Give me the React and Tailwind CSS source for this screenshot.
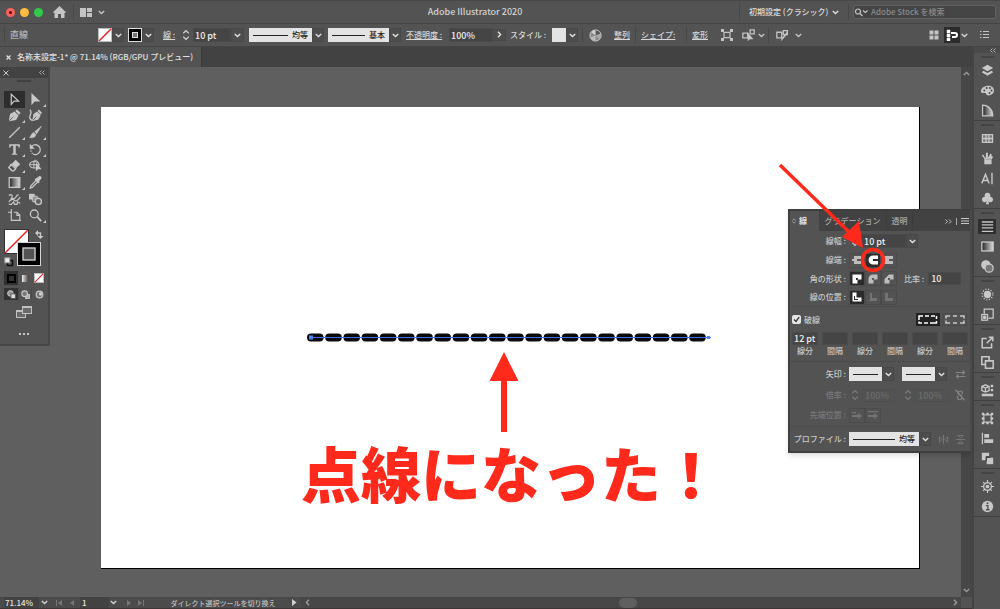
import React, { useState } from 'react';
import clsx from 'clsx';

const Icon = ({ size = 14, children, className }) => (
  <svg width={size} height={size} viewBox="0 0 16 16" fill="none" stroke="currentColor" strokeWidth="1.600" className={clsx('shrink-0', className)} aria-hidden="true">
    {children}
  </svg>
);

const Chevron = ({ className }) => (
  <svg width="7" height="5" viewBox="0 0 7 5" fill="none" stroke="currentColor" strokeWidth="1.400" className={clsx('shrink-0', className)} aria-hidden="true">
    <path d="M.8 1l2.700 2.600L6.200 1" />
  </svg>
);

const Stepper = ({ className }) => (
  <svg width="8" height="12" viewBox="0 0 8 12" fill="none" stroke="currentColor" strokeWidth="1.200" className={clsx('shrink-0', className)} aria-hidden="true">
    <path d="M1.300 4.200L4 1.600l2.700 2.600M1.300 7.800L4 10.400l2.700-2.600" />
  </svg>
);

const DropButton = ({ label, className }) => (
  <button aria-label={label} className={clsx('flex h-[14px] w-3 shrink-0 items-center justify-center border border-[#484848] bg-[#4d4d4d] text-[#e0e0e0]', className)}>
    <Chevron />
  </button>
);

const Separator = ({ className }) => <span className={clsx('h-4 w-px shrink-0 bg-[#474747]', className)} />;

const NoneSwatch = ({ size }) => (
  <svg width={size} height={size} viewBox="0 0 14 14" aria-hidden="true">
    <rect x=".5" y=".5" width="13" height="13" fill="#fff" stroke="#bbb" />
    <path d="M1 13L13 1" stroke="#e8202a" strokeWidth="1.500" />
  </svg>
);

// light swatch with a line sample, used for profiles, brushes and arrowheads
const LineSample = ({ label, text, className }) => (
  <button aria-label={label} className={clsx('flex h-[14px] shrink-0 items-center gap-1 bg-[#e3e3e3] px-1 text-[#222]', className)}>
    <span className="h-px flex-1 bg-[#222]" />
    {text && <span className="leading-3">{text}</span>}
  </button>
);

const TitleBar = () => (
  <header className="flex h-6 shrink-0 items-center border-b border-[#444] border-t border-t-[#484848]">
    <div className="flex w-[211px] shrink-0 items-center">
      <button aria-label="閉じる" className="ml-[6px] flex size-[9px] items-center justify-center rounded-full bg-[#fc605c]">
        <span className="size-[3px] rounded-full bg-[#4d0000]" />
      </button>
      <button aria-label="しまう" className="ml-[5px] size-[9px] rounded-full bg-[#fdbc40]" />
      <button aria-label="拡大" className="ml-[5px] size-[9px] rounded-full bg-[#34c84a]" />
      <button aria-label="ホーム" className="ml-[10px] text-[#c4c4c4]">
        <svg width="13" height="12" viewBox="0 0 13 12" fill="currentColor"><path d="M6.500 0L13 6.300l-.8.800-.7-.600V12H8V8H5v4H1.500V6.500l-.7.600L0 6.300z" /></svg>
      </button>
      <Separator className="ml-[7px]" />
      <button aria-label="ドキュメントのレイアウト" className="ml-[6px] flex items-center gap-[6px] text-[#c4c4c4]">
        <svg width="12" height="9" viewBox="0 0 12 9" fill="currentColor"><path d="M0 0h6v9H0zM7 0h5v4H7zM7 5h5v4H7z" /></svg>
        <Chevron />
      </button>
    </div>
    <h1 className="flex-1 text-center text-[9px] text-[#d0d0d0]">Adobe Illustrator 2020</h1>
    <div className="flex w-[261px] shrink-0 items-center">
      <Separator />
      <select aria-label="ワークスペース" className="ml-[9px] w-[83px] appearance-none bg-transparent text-[#dedede]" defaultValue="classic">
        <option value="classic">初期設定 (クラシック)</option>
      </select>
      <Chevron className="text-[#dedede]" />
      <Separator className="ml-[9px]" />
      <label className="mr-1 ml-1 flex h-[14px] flex-1 items-center rounded-xs border border-[#616161] bg-[#454545] text-[#c4c4c4]">
        <svg width="14" height="9" viewBox="0 0 14 9" fill="none" stroke="currentColor" strokeWidth="1.200" aria-hidden="true" className="shrink-0"><circle cx="4" cy="3.500" r="2.500" /><path d="M6 5.500L8.500 8M9 2.500l2.300 2 2.300-2" /></svg>
        <input aria-label="Adobe Stock を検索" placeholder="Adobe Stock を検索" className="ml-[3px] w-full min-w-0 bg-transparent placeholder:text-[#8a8a8a]" />
      </label>
    </div>
  </header>
);

const ControlBar = () => (
  <div className="flex h-[23px] shrink-0 items-center border-b border-[#444] text-[#d6d6d6]">
    <Separator className="ml-1" />
    <span className="ml-[5px] w-[88px] text-[9px] text-[#b5b5b5]">直線</span>
    <button aria-label="塗り"><NoneSwatch size={14} /></button>
    <DropButton label="塗りのスウォッチ" />
    <button aria-label="線のカラー" className="ml-1 size-[14px] border border-[#ddd] bg-black p-[3px]">
      <span className="block size-[6px] border border-[#ddd] bg-[#777]" />
    </button>
    <DropButton label="線のスウォッチ" />
    <label htmlFor="bar-width" className="ml-[9px] w-[16px] text-[#d6d6d6] underline">線 :</label>
    <Stepper className="ml-[3px]" />
    <input id="bar-width" defaultValue="10 pt" className="ml-[3px] h-[14px] w-[38px] border border-[#4a4a4a] bg-[#454545] pl-px text-[9px] text-[#eee]" />
    <DropButton label="線幅の候補" className="w-[13px]" />
    <LineSample label="可変線幅プロファイル" text="均等" className="ml-[5px] w-[63px]" />
    <DropButton label="プロファイルの候補" />
    <LineSample label="ブラシ定義" text="基本" className="ml-1 w-[61px]" />
    <DropButton label="ブラシの候補" />
    <label htmlFor="opacity" className="ml-[5px] w-[43px] underline">不透明度 :</label>
    <input id="opacity" defaultValue="100%" className="h-[14px] w-[44px] border border-[#4a4a4a] bg-[#454545] pl-px text-[9px] text-[#eee]" />
    <DropButton label="不透明度スライダー" className="-rotate-90" />
    <span className="ml-[5px] w-[42px]">スタイル :</span>
    <button aria-label="グラフィックスタイル" className="size-[14px] bg-[#e3e3e3]" />
    <DropButton label="スタイルの候補" />
    <Separator className="ml-1" />
    <button aria-label="オブジェクトを再配色" className="ml-[6px]">
      <svg width="13" height="13" viewBox="0 0 14 14"><circle cx="7" cy="7" r="6" fill="#888" stroke="#d5d5d5" /><path d="M7 7V1.500A5.500 5.500 0 0 1 12 5z" fill="#555" /><path d="M7 7l5-2a5 5 0 0 1-1 6z" fill="#aaa" /><path d="M7 7l-5 2a5 5 0 0 0 5 3.500z" fill="#bcbcbc" /><path d="M7 7L2.500 3.500A5 5 0 0 1 7 1.500z" fill="#d0d0d0" /></svg>
    </button>
    <button className="ml-3 w-[17px] text-left underline">整列</button>
    <Separator className="ml-1" />
    <button className="ml-[5px] w-[45px] text-left whitespace-nowrap underline">シェイプ:</button>
    <Separator />
    <button className="ml-[5px] w-[17px] text-left underline">変形</button>
    <button aria-label="選択オブジェクトを編集" className="ml-3 text-[#c4c4c4]">
      <Icon size={12}><path d="M4 4.500h8v7H4z" /><path d="M0 0h4v4H0zM12 0h4v4h-4zM0 12h4v4H0zM12 12h4v4h-4z" fill="currentColor" stroke="none" /></Icon>
    </button>
    <button aria-label="類似オブジェクトを選択" className="ml-[9px] flex items-center gap-[3px] text-[#c4c4c4]">
      <Icon size={13}><path d="M1 5h6v6H1zM10 1h5v5h-5z" /><path d="M7 4v11l2.500-2.500H14z" fill="currentColor" stroke="none" /></Icon>
      <Chevron />
    </button>
    <Separator className="ml-[3px]" />
    <button aria-label="編集モード" className="ml-[7px] flex items-center gap-[6px] text-[#c4c4c4]">
      <Icon size={13}><path d="M1 4h6v7H1zM9 2h5v5H9z" /><path d="M15 5l-6 7-3 3 1-4 6-7z" fill="currentColor" stroke="none" /></Icon>
      <Chevron />
    </button>
    <button aria-label="ピクセルにスナップ" className="ml-auto text-[#c4c4c4]">
      <svg width="10" height="10" viewBox="0 0 10 10" fill="currentColor"><path d="M.5.500h4v4h-4zM5.500.500h4v4h-4zM.5 5.500h4v4h-4zM5.500 5.500h4v4h-4z" /></svg>
    </button>
    <button aria-label="ポイントにスナップ" className="ml-[5px] flex size-4 items-center justify-center bg-[#2b2b2b] text-white">
      <svg width="12" height="12" viewBox="0 0 12 12" fill="none" stroke="currentColor"><path d="M1 1h3v3H1zM1 5h3v3H1zM1 9h3v3H1z" fill="currentColor" strokeWidth=".5" /><path d="M5 4h4a2 2 0 0 1 0 4H6" strokeWidth="2" /></svg>
    </button>
    <Chevron className="ml-px" />
    <button aria-label="コントロールメニュー" className="mr-[11px] ml-3 text-[#c4c4c4]">
      <svg width="9" height="8" viewBox="0 0 9 8" stroke="currentColor"><path d="M0 .5h1.500M0 3.500h1.500M0 6.500h1.500M3 .5h6M3 3.500h6M3 6.500h6" /></svg>
    </button>
  </div>
);

const tools = [
  { name: '選択', more: false, art: <path d="M4 1.500v12.500l3.500-4h5.500z" strokeWidth="1.500" /> },
  { name: 'ダイレクト選択', more: true, art: <path d="M3 0v15l4-4.500h7z" fill="currentColor" stroke="none" /> },
  { name: 'ペン', more: true, art: <><path d="M1 15l1.500-9L8 3l5 5-3 5.500z" fill="currentColor" stroke="none" /><path d="M9 2.500L11 .5l4.500 4.500-2 2z" fill="currentColor" stroke="none" /><path d="M1.500 14.500l5-5" stroke="#535353" strokeWidth="1" /></> },
  { name: '曲線', more: false, art: <><path d="M4 15l1.500-9L10 3l4.500 4.500-3 5.500z" fill="currentColor" stroke="none" /><path d="M10.500 2.500l1.500-2 4 4-1.500 2z" fill="currentColor" stroke="none" /><path d="M1 1c4 3-1 7 0 10s3 3 5 3" /><path d="M5 14l4-5" stroke="#535353" strokeWidth="1" /></> },
  { name: '直線', more: true, art: <path d="M1.500 14.500l13-13" /> },
  { name: 'ブラシ', more: true, art: <path d="M15.500 0L7 7l2.500 2.500zM6 8c-3 .5-3 4-5.500 6 3 1.500 8 0 8-3.500z" fill="currentColor" stroke="currentColor" strokeWidth=".6" /> },
  { name: '文字', more: true, art: <path d="M1.500 1.500h13v4h-1.500l-.6-2H9.500v9.500l2 .5v1h-7v-1l2-.5V3.500H3.600l-.6 2H1.500z" fill="currentColor" stroke="none" /> },
  { name: '回転', more: true, art: <><path d="M3 4.500A6 6 0 1 1 5 13.500" /><path d="M4.500 13.200A6 6 0 0 1 2.500 7" strokeDasharray="1.500 1.500" /><path d="M1 1v6h6z" fill="currentColor" stroke="none" /></> },
  { name: '消しゴム', more: true, art: <><path d="M9.500 1L15 6.500 10 11.500 4.500 6z" fill="currentColor" stroke="none" /><path d="M4 6.500L9.500 12 7 14.500H5L1 10.500z" /></> },
  { name: 'シェイプ形成', more: false, art: <><ellipse cx="6.500" cy="7" rx="5.800" ry="4" strokeWidth="1.300" /><path d="M5 3c2-3 6-1 7 3M1 7h12M6 3v8" strokeWidth="1.200" /><path d="M8.500 4v11l2.500-2.500h4.500z" fill="currentColor" stroke="none" /></> },
  { name: 'グラデーション', more: true, art: <rect x="1.500" y="2" width="13" height="12" fill="url(#dark-light)" /> },
  { name: 'スポイト', more: false, art: <><path d="M9 5l2 2-7 7-2.500.8.700-2.500z" /><path d="M8 3l1.500-.5L12 .5c2-1.500 4.500 1 3 3L12.500 6.500 13 8l-1.500 1L7 4.500z" fill="currentColor" stroke="none" /></> },
  { name: 'シンボルスプレー', more: false, art: <path d="M1 3c3-2 5 0 4 2s2 3 4 1 1-3 4-4M1 11c2-3 5-4 7-2s4 0 7-4M1 14h3l3-3 1 3h3l1-3 3 2M3 7l4 1" strokeWidth="1.500" /> },
  { name: 'ブレンド', more: false, art: <><path d="M0 1h7v7H0z" fill="currentColor" stroke="none" /><rect x="4" y="4" width="7" height="7" rx="2" fill="#909090" strokeWidth="1.200" /><circle cx="11.500" cy="10.500" r="3.800" fill="#606060" /></> },
  { name: 'アートボード', more: false, art: <path d="M4 0v14h12M0 4h5M7 4h4l3.500 3.500V14M11 4v4h3.500" strokeWidth="1.400" /> },
  { name: 'ズーム', more: true, art: <><circle cx="6.500" cy="6" r="4.800" /><path d="M10 9.500l5 5.500" strokeWidth="2.200" /></> },
];

const ToolsPanel = () => {
  const [active, setActive] = useState('選択');

  return (
    <aside className="absolute top-0 left-0 w-[50px] border-r-2 border-b-2 border-[#474747] bg-[#535353] text-[#c8c8c8]">
      <div className="flex h-[11px] items-center justify-between bg-[#424242] px-[3px]">
        <button aria-label="パネルを閉じる"><svg width="6" height="6" viewBox="0 0 6 6" stroke="currentColor"><path d="M.5.500l5 5M5.500.500l-5 5" /></svg></button>
        <button aria-label="折りたたむ"><svg width="6" height="5" viewBox="0 0 6 5" fill="none" stroke="currentColor" strokeWidth=".8"><path d="M2.500.500l-2 2 2 2M5.500.500l-2 2 2 2" /></svg></button>
      </div>
      <div className="mx-auto mt-[2px] h-[2px] w-[14px] bg-[#414141]" />
      <div className="mt-[9px] ml-1 grid h-[133px] w-[42px] grid-cols-2 grid-rows-8">
        {tools.map(tool => (
          <button
            key={tool.name}
            aria-label={tool.name}
            onClick={() => setActive(tool.name)}
            className={clsx('relative flex items-center justify-center', active === tool.name && 'bg-[#2d2d2d]')}
          >
            <Icon size={13}>{tool.art}</Icon>
            {tool.more && (
              <svg width="3" height="3" viewBox="0 0 3 3" fill="currentColor" className="absolute right-0 bottom-px"><path d="M3 0v3H0z" /></svg>
            )}
          </button>
        ))}
      </div>
      <button aria-label="塗りと線" className="mt-[5px] ml-1 block">
        <svg width="41" height="38" viewBox="0 0 41 38" fill="none">
          <rect x=".5" y=".5" width="24" height="24" fill="#fff" stroke="#333" />
          <path d="M1 24L24 1" stroke="#ee1c1c" strokeWidth="1.400" />
          <rect x="13.500" y="13.500" width="23" height="23" fill="#000" stroke="#d5d5d5" />
          <rect x="19" y="19" width="12" height="12" fill="#535353" stroke="#cfcfcf" strokeWidth="1.400" />
          <path d="M33 4h3.500v4" stroke="#c8c8c8" strokeWidth="1.400" />
          <path d="M34 1v6l-3-3zM33.500 7h6l-3 3z" fill="#c8c8c8" />
          <rect x="3.500" y="31.500" width="5" height="5" stroke="#111" strokeWidth="1.500" />
          <rect x=".8" y="28.800" width="5" height="5" fill="#eee" stroke="#999" />
        </svg>
      </button>
      <div className="mt-1 ml-1 grid h-[14px] w-[42px] grid-cols-3">
        <button aria-label="カラー" className="flex items-center justify-center bg-[#303030]"><span className="size-[9px] border-2 border-black bg-[#333]" /></button>
        <button aria-label="グラデーションで塗る" className="flex items-center justify-center"><span className="size-[9px] border border-[#555] bg-linear-to-r from-[#eee] to-[#443c38]" /></button>
        <button aria-label="なし" className="flex items-center justify-center"><NoneSwatch size={10} /></button>
      </div>
      <div className="mt-[3px] ml-1 grid h-3 w-[42px] grid-cols-3">
        <button aria-label="標準描画" className="flex items-center justify-center bg-[#333]"><Icon size={9}><circle cx="6" cy="6" r="5" fill="#999" /><rect x="7" y="7" width="8" height="8" fill="#ddd" stroke="#555" /></Icon></button>
        <button aria-label="背面描画" className="flex items-center justify-center border-x border-[#4a4a4a]"><Icon size={9}><rect x="8" y="8" width="7" height="7" fill="#aaa" /><circle cx="6.500" cy="6.500" r="5" fill="#777" strokeWidth="2" /></Icon></button>
        <button aria-label="内側描画" className="flex items-center justify-center"><Icon size={9}><circle cx="8" cy="8" r="6" fill="#777" strokeWidth="2" /><path d="M8 5h4v4H8z" fill="#ddd" /></Icon></button>
      </div>
      <button aria-label="スクリーンモード" className="mx-auto mt-[6px] block w-4">
        <svg width="16" height="13" viewBox="0 0 16 13" fill="#6a6a6a" stroke="#c0c0c0"><rect x=".5" y="4.500" width="9" height="7" /><path d="M.5 5.500h9" /><rect x="6.500" y=".5" width="9" height="7" /><path d="M6.500 1.500h9" /></svg>
      </button>
      <button aria-label="ツールバーを編集" className="mx-auto mt-[14px] mb-2 flex h-[3px] w-[10px] justify-between">
        <span className="size-[2px] bg-[#c8c8c8]" />
        <span className="size-[2px] bg-[#c8c8c8]" />
        <span className="size-[2px] bg-[#c8c8c8]" />
      </button>
    </aside>
  );
};

const dockGroups = [
  [
    { name: 'レイヤー', art: <path d="M8 1l7 4-7 4-7-4zM3 8.300L8 11l5-2.700L15 10l-7 4.500L1 10z" fill="currentColor" stroke="none" /> },
    { name: 'カラー', art: <><path d="M9 2c4 0 7 2.500 7 6s-3 6-7 6c-3 0-2-3-4-3S0 12 0 8.500 4 2 9 2z" fill="currentColor" stroke="none" /><g fill="#444" stroke="none"><circle cx="4" cy="8" r="1.200" /><circle cx="7" cy="5" r="1.200" /><circle cx="11" cy="5" r="1.200" /><circle cx="13" cy="8" r="1.200" /><circle cx="10.500" cy="11" r="1.200" /></g></> },
    { name: 'カラーガイド', art: <path d="M2 1.500v13h12.500C14.500 7 9 1.500 2 1.500z" fill="url(#dark-light)" /> },
  ],
  [
    { name: 'スウォッチ', art: <><rect x="1" y="2.500" width="14" height="11" fill="currentColor" stroke="none" /><path d="M2.500 4h3v3h-3zM7 4h2v3H7zM10.500 4h3v3h-3zM2.500 9h3v3h-3zM7 9h2v3H7zM10.500 9h3v3h-3z" fill="#555" stroke="none" opacity=".7" /></> },
    { name: 'ブラシ', art: <path d="M4 9h9v6H4zM4.500 9L1 4l1.500-1L6 8V1h2.500v6l3-5 2 1-2 5M11 8l2-3 2 1-2 3z" fill="currentColor" stroke="none" /> },
    { name: '文字', art: <path d="M1 14L5.500 3 10 14M2.500 10.500h6M13.500 1v14" strokeWidth="1.700" /> },
    { name: 'シンボル', art: <path d="M8 1a3.300 3.300 0 0 1 3 5 3.300 3.300 0 1 1-2 5.500L10 15H6l1-3.500A3.300 3.300 0 1 1 5 6a3.300 3.300 0 0 1 3-5z" fill="currentColor" stroke="none" /> },
  ],
  [
    { name: '線', active: true, art: <path d="M1 2.500h14M1 6h14M1 9.700h14M1 14h14" strokeWidth="1.800" /> },
    { name: 'グラデーション', art: <rect x="1" y="2.500" width="14" height="11" fill="url(#dark-light)" /> },
    { name: '透明', art: <><circle cx="6" cy="6" r="5" fill="currentColor" /><circle cx="10" cy="10" r="5" fill="#777" /></> },
  ],
  [
    { name: 'アピアランス', art: <><circle cx="8" cy="8" r="4.500" fill="currentColor" stroke="none" /><circle cx="8" cy="8" r="6.500" strokeWidth="1.800" strokeDasharray="1.300 2.100" /></> },
    { name: 'グラフィックスタイル', art: <><path d="M4 7V1.500h11v11H9" /><rect x="1" y="8" width="7" height="7" /><circle cx="4.500" cy="11.500" r="1.500" fill="currentColor" /></> },
  ],
  [
    { name: 'アセットの書き出し', art: <path d="M7 3H1.500v11.500H13V9M7 9l7-7M9.500 1.500h5v5" strokeWidth="1.900" /> },
    { name: 'アートボード', art: <path d="M5 10.500H1V1h9v4M5.500 6h9.500v9H5.500z" strokeWidth="1.900" /> },
  ],
  [
    { name: 'ライブラリ', art: <><path d="M5.500 1L10 3v5L5.500 10 1 8V3zM1 3l4.500 2L10 3M5.500 5v5" /><path d="M12 1h3v3h-3zM12 6h3v3h-3zM1 12h14v3H1z" fill="currentColor" stroke="none" /></> },
  ],
  [
    { name: '変形', art: <><rect x="3.500" y="3.500" width="9" height="9" strokeWidth="1.400" /><path d="M1 1h3v3H1zM6.500 1h3v3h-3zM12 1h3v3h-3zM1 6.500h3v3H1zM12 6.500h3v3h-3zM1 12h3v3H1zM6.500 12h3v3h-3zM12 12h3v3h-3z" fill="currentColor" stroke="none" /></> },
    { name: '整列', art: <path d="M1 1h1.500v14H1zM4 2.500h6V7H4zM4 9h11v4.500H4z" fill="currentColor" stroke="none" /> },
    { name: 'パスファインダー', art: <><path d="M1 1h9v4H6v5H1z" fill="currentColor" stroke="none" /><path d="M7 7h8v8H7z" fill="currentColor" stroke="none" /><path d="M6.500 11V6.500H11" stroke="#444" /></> },
  ],
  [
    { name: 'CC ライブラリ', art: <><circle cx="8" cy="8" r="4.800" /><circle cx="8" cy="8" r="1.500" fill="currentColor" /><path d="M8 0v4M8 12v4M0 8h4M12 8h4M2.500 2.500l3 3M10.500 10.500l3 3M13.500 2.500l-3 3M5.500 10.500l-3 3" strokeWidth="1.400" /></> },
    { name: 'ドキュメント情報', art: <><circle cx="8" cy="8" r="7" fill="currentColor" stroke="none" /><path d="M6 7h2.500v5M6 12h4.500" stroke="#505050" /><circle cx="8" cy="4" r="1.200" fill="#505050" stroke="none" /></> },
  ],
];

const Dock = () => (
  <nav className="w-7 shrink-0 border-l-2 border-[#444] bg-[#535353] text-[#c8c8c8]">
    <div className="flex h-[6px] items-center justify-end bg-[#4a4a4a] pr-1">
      <button aria-label="パネルを展開"><svg width="6" height="5" viewBox="0 0 6 5" fill="none" stroke="currentColor" strokeWidth=".8"><path d="M2.500.500l-2 2 2 2M5.500.500l-2 2 2 2" /></svg></button>
    </div>
    {dockGroups.map(group => (
      <div key={group[0].name} className="border-b border-[#404040]">
        <div className="flex h-[7px] items-center justify-center"><span className="h-[2px] w-[13px] bg-[#444]" /></div>
        {group.map(item => (
          <button key={item.name} aria-label={item.name} className="mx-auto flex h-5 w-[18px] items-center justify-center">
            <span className={clsx('flex h-[15px] w-[18px] items-center justify-center', item.active && 'bg-[#2f2f2f]')}>
              <Icon size={13}>{item.art}</Icon>
            </span>
          </button>
        ))}
      </div>
    ))}
  </nav>
);

const ShapeButton = ({ label, active, disabled, children }) => (
  <button
    aria-label={label}
    disabled={disabled}
    className={clsx('flex h-[15px] w-4 items-center justify-center border border-[#4b4b4b]', active ? 'bg-[#2b2b2b] text-white' : disabled ? 'text-[#737373]' : 'text-[#bdbdbd]')}
  >
    <svg width="10" height="10" viewBox="0 0 10 10" fill="currentColor">{children}</svg>
  </button>
);

const Row = ({ label, htmlFor, className, children }) => (
  <div className={clsx('flex items-center', className)}>
    <label htmlFor={htmlFor} className="mr-[3px] w-[56px] shrink-0 text-right whitespace-nowrap">{label} :</label>
    {children}
  </div>
);

const dashFields = [
  { label: '線分', value: '12 pt' },
  { label: '間隔', value: '' },
  { label: '線分', value: '' },
  { label: '間隔', value: '' },
  { label: '線分', value: '' },
  { label: '間隔', value: '' },
];

const StrokePanel = () => (
  <section className="absolute top-[142px] right-0 w-[184px]">
    <div className="border-2 border-[#3f3f3f] border-r-[#4a4a4a] bg-[#535353] text-[#c8c8c8] shadow-md">
      <div className="flex h-[20px] items-center bg-[#424242] text-[#a8a8a8]">
        <button className="flex h-full w-[29px] items-center gap-[3px] bg-[#535353] pl-[2px] font-bold text-[#e6e6e6]">
          <svg width="4" height="6" viewBox="0 0 4 6" fill="none" stroke="#bbb" strokeWidth=".7"><path d="M.5 2.500L2 .8l1.500 1.700M.5 3.500L2 5.200l1.500-1.700" /></svg>
          線
        </button>
        <button className="h-full w-[68px] border-r border-[#3c3c3c] text-center">グラデーション</button>
        <button className="h-full w-[26px] border-r border-[#3c3c3c] text-center">透明</button>
        <span className="mr-px ml-auto flex items-center gap-1 text-[#c8c8c8]">
          <svg width="7" height="5" viewBox="0 0 7 5" fill="none" stroke="currentColor" strokeWidth="1"><path d="M.5.500l2 2-2 2M4 .5l2 2-2 2" /></svg>
          <span className="h-[7px] w-px bg-[#aaa]" />
          <button aria-label="パネルメニュー"><svg width="8" height="6" viewBox="0 0 8 6" stroke="currentColor" strokeWidth="1"><path d="M0 .5h8M0 3h8M0 5.500h8" /></svg></button>
        </span>
      </div>

      <Row label="線幅" htmlFor="stroke-width" className="h-5">
        <Stepper className="ml-[2px]" />
        <input id="stroke-width" defaultValue="10 pt" className="ml-[2px] h-[14px] w-[45px] border border-[#4a4a4a] bg-[#454545] pl-[2px] text-[9px] text-[#eee]" />
        <DropButton label="線幅の候補" />
      </Row>
      <Row label="線端" className="h-[18px]">
        <ShapeButton label="線端なし"><path d="M2 1h7v3H5v2h4v3H2V6H0V4h2z" /></ShapeButton>
        <ShapeButton label="丸型線端" active><path d="M10 .5H5a4.500 4.500 0 0 0 0 9h5V6H5V4h5z" /></ShapeButton>
        <ShapeButton label="突出線端"><path d="M0 1h9v3H5v2h4v3H0z" /></ShapeButton>
      </Row>
      <Row label="角の形状" htmlFor="miter" className="h-[19px]">
        <ShapeButton label="マイター結合" active><path fillRule="evenodd" d="M.5.500h9v5h-4v4h-5zM4 4v2h2V4z" /></ShapeButton>
        <ShapeButton label="ラウンド結合"><path fillRule="evenodd" d="M5 .5h4.500v5h-4v4h-5V5A4.500 4.500 0 0 1 5 .5zM4 4v2h2V4z" /></ShapeButton>
        <ShapeButton label="ベベル結合"><path fillRule="evenodd" d="M5 .5h4.500v5h-4v4h-5V5zM4 4v2h2V4z" /></ShapeButton>
        <label htmlFor="miter" className="mr-1 ml-[7px] whitespace-nowrap">比率 :</label>
        <input id="miter" defaultValue="10" className="h-[13px] w-[33px] border border-[#4a4a4a] bg-[#454545] pl-[2px] text-[9px] text-[#eee]" />
      </Row>
      <Row label="線の位置" className="h-[18px]">
        <ShapeButton label="線を中央に揃える" active><path fillRule="evenodd" d="M.5.500h4v5h5v4h-9zM2 4v4h4V7H3V4z" /></ShapeButton>
        <ShapeButton label="線を内側に揃える" disabled><path d="M2 1h2v5h5v3H1V8h1z" /></ShapeButton>
        <ShapeButton label="線を外側に揃える" disabled><path d="M1 1h3v5h5v3H1z" /></ShapeButton>
      </Row>

      <div className="mx-[2px] flex h-[26px] items-center border-t border-[#4b4b4b]">
        <label className="flex items-center gap-[3px]">
          <span className="relative flex size-[9px]">
            <input type="checkbox" defaultChecked className="peer size-[9px] appearance-none rounded-xs bg-[#e6e6e6]" />
            <svg width="9" height="9" viewBox="0 0 9 9" fill="none" stroke="#333" strokeWidth="1.300" className="pointer-events-none invisible absolute inset-0 peer-checked:visible"><path d="M2 4.500l2 2 3.200-4.300" /></svg>
          </span>
          破線
        </label>
        <button aria-label="線分と間隔の正確な長さを保持" className="ml-auto flex h-[13px] w-6 items-center justify-center bg-[#222] text-white">
          <svg width="20" height="9" viewBox="0 0 20 9" fill="none" stroke="currentColor" strokeWidth="1.500"><path d="M1 5V1h4M7 1h4M13 1h4M18.500 1v3M1 6.500V8h3M6 8h4M12 8h6.500V6" /></svg>
        </button>
        <button aria-label="コーナーに破線の先端を整列" className="mr-px ml-[3px] flex h-[13px] w-6 items-center justify-center border border-[#4b4b4b]">
          <svg width="20" height="9" viewBox="0 0 20 9" fill="none" stroke="currentColor" strokeWidth="1.500"><path d="M1 3.500V1h4M8 1h4M15 1h4v2.500M1 5.500V8h4M8 8h4M15 8h4V5.500" /></svg>
        </button>
      </div>

      <div className="mx-[2px] grid h-[29px] grid-cols-6 gap-x-1">
        {dashFields.map((field, i) => (
          <label key={i} className="flex flex-col items-center">
            <input defaultValue={field.value} className="h-[13px] w-full border border-[#4b4b4b] bg-[#454545] pl-px text-[9px] text-[#eee]" />
            <span className="leading-3">{field.label}</span>
          </label>
        ))}
      </div>

      <Row label="矢印" className="h-[25px] border-t border-[#4b4b4b]">
        <LineSample label="始点の矢印" className="w-[33px]" />
        <DropButton label="始点の候補" />
        <LineSample label="終点の矢印" className="ml-2 w-[33px]" />
        <DropButton label="終点の候補" />
        <Icon size={11} className="ml-2 text-[#858585]"><path d="M1 5h13M11 2l3 3-3 3M15 11H2M5 8l-3 3 3 3" /></Icon>
      </Row>
      <Row label="倍率" htmlFor="scale-start" className="h-[18px] text-[#7a7a7a]">
        <Stepper className="ml-[2px]" />
        <input id="scale-start" disabled defaultValue="100%" className="ml-[3px] h-[13px] w-[33px] border border-[#4f4f4f] pl-[2px] text-[9px] text-[#6c6c6c]" />
        <Stepper className="ml-[9px]" />
        <input aria-label="終点の倍率" disabled defaultValue="100%" className="ml-[3px] h-[13px] w-[33px] border border-[#4f4f4f] pl-[2px] text-[9px] text-[#6c6c6c]" />
        <Icon size={12} className="ml-[6px] text-[#858585]"><path d="M2 1l12 14M6 8V4a3 3 0 0 1 5 0v3M10 8v5a3 3 0 0 1-5 0V9" /></Icon>
      </Row>
      <Row label="先端位置" className="h-[22px] text-[#7a7a7a]">
        <ShapeButton label="パスの終点から配置" disabled><path d="M0 5h6V3l4 3-4 3V7H0zM0 2h4v1.200H0z" /></ShapeButton>
        <ShapeButton label="パスの終点に配置" disabled><path d="M0 5h6V3l4 3-4 3V7H0zM0 1h10v1.200H0z" /></ShapeButton>
      </Row>
      <Row label="プロファイル" className="h-[25px] border-t border-[#4b4b4b]">
        <LineSample label="プロファイル" text="均等" className="w-[70px]" />
        <DropButton label="プロファイルの候補" />
        <Icon size={11} className="ml-[7px] text-[#7d7d7d]"><path d="M8 1v14M2 4v8l4-4zM14 4v8l-4-4z" strokeWidth="1.200" /></Icon>
        <Icon size={11} className="ml-[6px] text-[#7d7d7d]"><path d="M1 8h14M4 2h8L8 6zM4 14h8l-4-4z" strokeWidth="1.200" /></Icon>
      </Row>
    </div>

    {/* arrow and ring pointing at the round cap */}
    <svg width="112" height="116" viewBox="0 0 112 116" fill="none" className="pointer-events-none absolute -top-[48px] -left-[13px]" aria-hidden="true">
      <path d="M5 4l69 67" stroke="#ff2a1c" strokeWidth="3.500" />
      <path d="M88 87L67 76 84 60z" fill="#ff2a1c" />
      <circle cx="98" cy="99" r="10.500" stroke="#ff2a1c" strokeWidth="3.500" />
    </svg>
  </section>
);

const Artboard = () => (
  <div className="relative h-full border-r border-b border-black bg-white">
    {/* dashed path with its selection overlay */}
    <svg width="406" height="12" viewBox="0 0 406 12" className="absolute top-[225px] left-[205px]" aria-hidden="true">
      <path d="M5 5.500h392" stroke="#0a0a0a" strokeWidth="8" strokeLinecap="round" strokeDasharray="8.600 9.600" />
      <path d="M5 5.500h400" stroke="#3f6fe8" strokeWidth="1" />
      <path d="M3 3.500h4v4H3zM401 4h3v3h-3z" fill="#4f80ff" />
    </svg>
    <svg width="30" height="82" viewBox="0 0 30 82" fill="#ff2a1c" className="absolute top-[245px] left-[388px]" aria-hidden="true">
      <path d="M15 0l14.500 29H18v51h-6V29H.5z" />
    </svg>
    <p className="absolute top-[335px] left-[200px] text-6xl font-black whitespace-nowrap text-[#ff2a1c]">点線になった！</p>
  </div>
);

const StatusBar = () => (
  <footer className="flex h-3 shrink-0 items-center overflow-hidden border-b border-[#3c3636] bg-[#4b4b4b] text-[#d0d0d0]">
    <input aria-label="ズーム" defaultValue="71.14%" className="ml-1 h-3 w-[35px] bg-[#424242] pl-px text-[#e0e0e0]" />
    <Chevron className="ml-[2px]" />
    <span className="ml-2 flex w-[21px] shrink-0 items-center gap-[7px] text-[#777]">
      <button aria-label="最初"><svg width="7" height="6" viewBox="0 0 7 6" fill="currentColor"><path d="M0 0h1v6H0zM6 0v6L2 3z" /></svg></button>
      <button aria-label="前へ"><svg width="5" height="6" viewBox="0 0 5 6" fill="currentColor"><path d="M4 0v6L0 3z" /></svg></button>
    </span>
    <input aria-label="アートボード番号" defaultValue="1" className="ml-[3px] h-3 w-[29px] bg-[#424242] pl-[2px] text-[#e0e0e0]" />
    <Chevron className="ml-px" />
    <span className="ml-[10px] flex w-[29px] shrink-0 items-center gap-[6px] text-[#777]">
      <button aria-label="次へ"><svg width="5" height="6" viewBox="0 0 5 6" fill="currentColor"><path d="M0 0v6l4-3z" /></svg></button>
      <button aria-label="最後"><svg width="7" height="6" viewBox="0 0 7 6" fill="currentColor"><path d="M5 0h1v6H5zM0 0v6l4-3z" /></svg></button>
    </span>
    <span className="w-[134px] shrink-0 text-center text-[7px] text-[#c0c0c0]">ダイレクト選択ツールを切り換え</span>
    <button aria-label="ステータス表示" className="ml-[2px]"><svg width="5" height="7" viewBox="0 0 5 7" fill="currentColor"><path d="M0 0v7l4.500-3.500z" /></svg></button>
    <div className="ml-1 flex h-full flex-1 items-center border-l border-[#444] bg-[#474747] px-[2px] text-[#999]">
      <Chevron className="rotate-90" />
      <span className="ml-[47%] h-[10px] w-[18px] rounded-full bg-[#5f5f5f]" />
      <Chevron className="ml-auto -rotate-90" />
    </div>
    <span className="h-full w-[11px] shrink-0 bg-[#535353]" />
  </footer>
);

const App = () => (
  <div className="flex h-screen flex-col overflow-hidden bg-[#535353] font-['Noto_Sans_CJK_JP',sans-serif] text-[8px] leading-3 font-medium">
    <svg width="0" height="0" className="absolute" aria-hidden="true">
      <linearGradient id="dark-light">
        <stop offset="0" stopColor="#222" />
        <stop offset="1" stopColor="#ddd" />
      </linearGradient>
    </svg>
    <TitleBar />
    <ControlBar />
    <div className="flex min-h-0 flex-1">
      <main className="relative flex min-w-0 flex-1 flex-col">
        <div className="flex h-5 shrink-0 bg-[#424242]">
          <div className="flex items-center gap-[6px] border-r border-[#3a3a3a] bg-[#535353] pr-2 pl-[6px] text-[#e0e0e0]">
            <button aria-label="タブを閉じる"><svg width="5" height="5" viewBox="0 0 5 5" stroke="currentColor" strokeWidth="1.200"><path d="M.5.500l4 4M4.500.500l-4 4" /></svg></button>
            <span>名称未設定-1* @ 71.14% (RGB/GPU プレビュー)</span>
          </div>
        </div>
        <div className="relative flex min-h-0 flex-1 bg-[#5f5f5f]">
          <div className="min-w-0 flex-1 pt-10 pr-[41px] pb-7 pl-[101px]">
            <Artboard />
          </div>
          <div className="flex w-[11px] shrink-0 flex-col items-center justify-between bg-[#474747] py-1 text-[#999]">
            <Chevron className="rotate-180" />
            <Chevron />
          </div>
          <ToolsPanel />
          <StrokePanel />
        </div>
        <StatusBar />
      </main>
      <Dock />
    </div>
  </div>
);

export default App;
